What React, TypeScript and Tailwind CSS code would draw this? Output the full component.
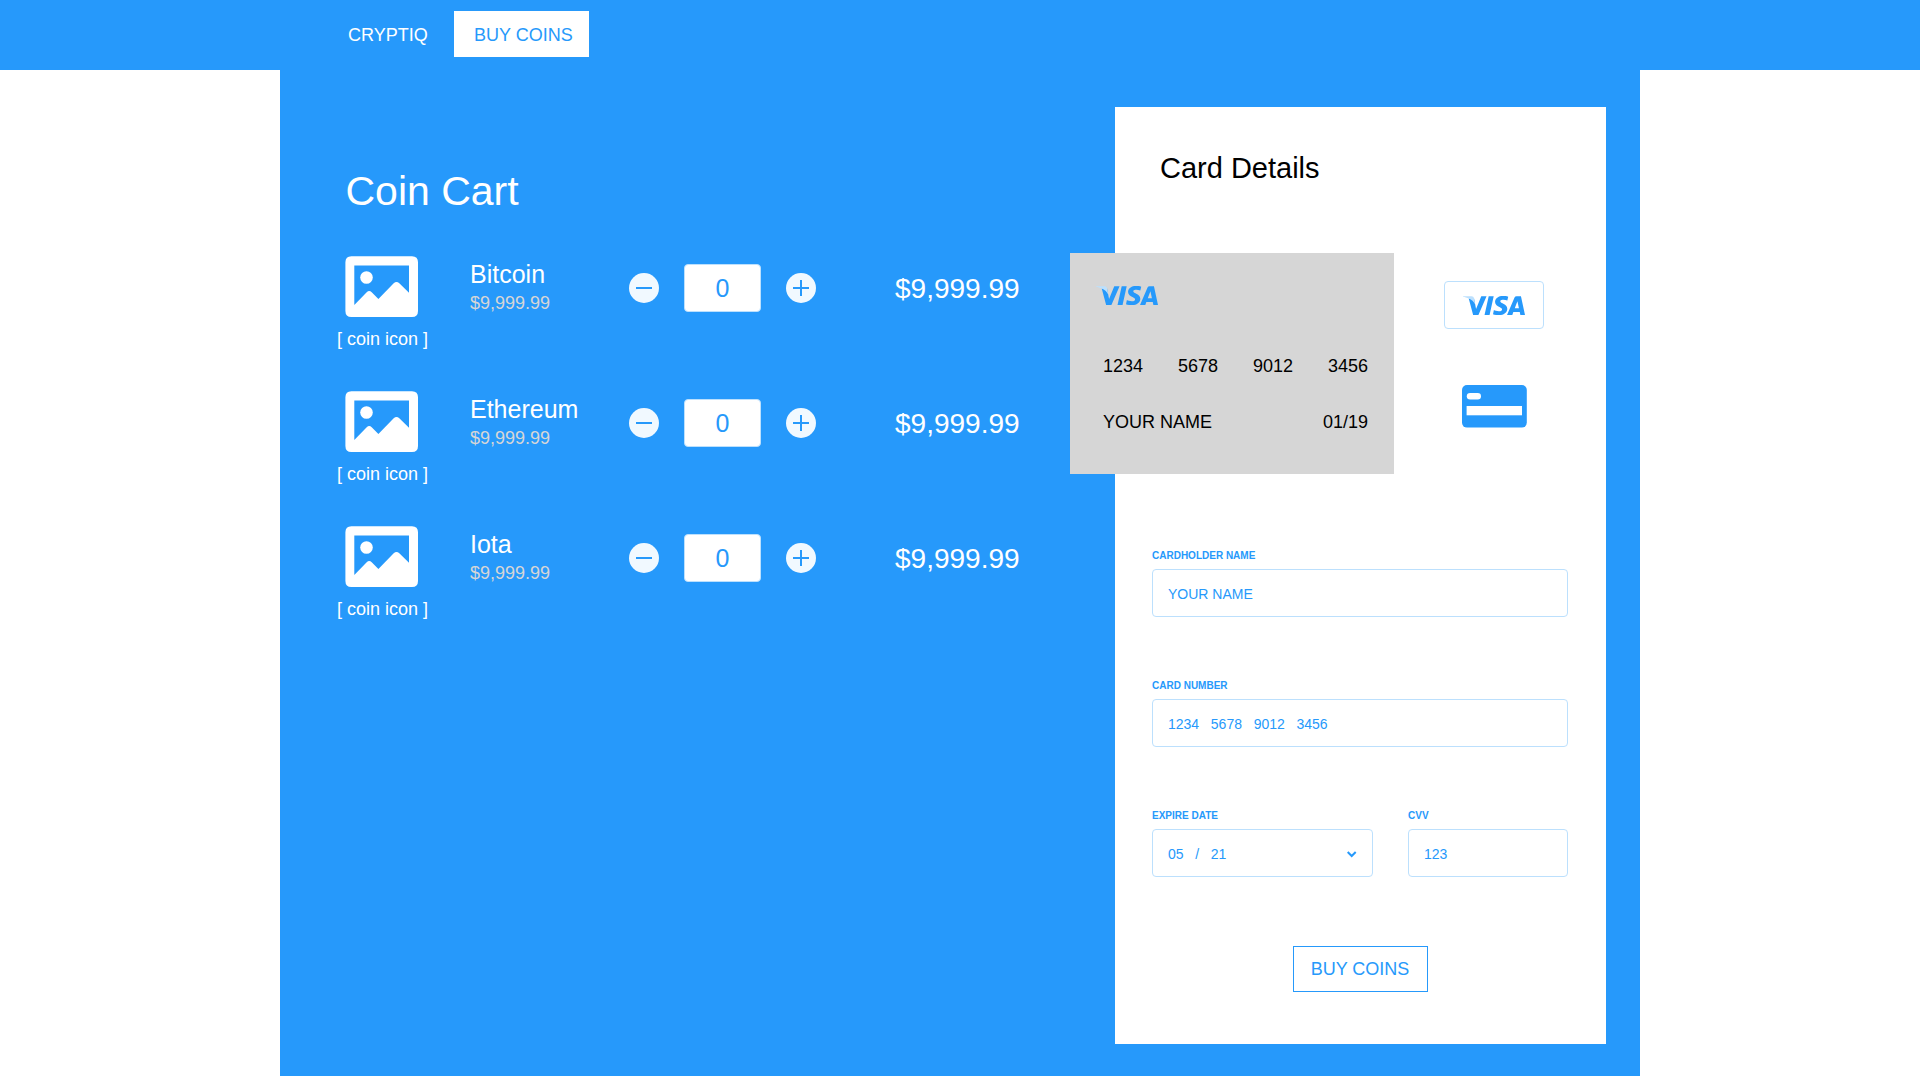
import React from "react";

const coins = [
  { name: "Bitcoin", price: "$9,999.99", quantity: 0, total: "$9,999.99" },
  { name: "Ethereum", price: "$9,999.99", quantity: 0, total: "$9,999.99" },
  { name: "Iota", price: "$9,999.99", quantity: 0, total: "$9,999.99" },
];

function PictureIcon() {
  return (
    <svg width="73" height="61" viewBox="0 0 73 61" className="block" aria-hidden="true">
      <path
        fill="#fff"
        fillRule="evenodd"
        d="M6.4 .2H67Q73 .2 73 6.2V55Q73 61 67 61H6.4Q.4 61 .4 55V6.2Q.4 .2 6.4 .2ZM9.3 9.5V49L21.7 36.2Q24.2 33.8 26.7 36.2L33.4 43L48.7 27.3Q51.5 24.7 54.3 27.3L64 36.7V9.5Z"
      />
      <circle cx="21.5" cy="21.5" r="6.3" fill="#fff" />
    </svg>
  );
}

function VisaLogo() {
  return (
    <svg width="62" height="19" viewBox="0 8.2 24 7.6" preserveAspectRatio="none" className="block" role="img" aria-label="Visa">
      <path
        fill="#2699FB"
        d="M9.112 8.262L5.97 15.758H3.92L2.374 9.775L2.2 9.2L4.24 9.026l.817 4.338 2.018-5.102zm8.033 5.049c.008-1.979-2.736-2.088-2.717-2.972.006-.269.262-.555.822-.628a3.66 3.66 0 011.913.336l.34-1.59a5.207 5.207 0 00-1.814-.333c-1.917 0-3.266 1.02-3.278 2.479-.012 1.079.963 1.68 1.698 2.04.756.367 1.01.603 1.006.931-.005.504-.602.725-1.16.734-.975.015-1.54-.263-1.992-.473l-.351 1.642c.453.208 1.289.39 2.156.398 2.037 0 3.37-1.006 3.377-2.564m5.061 2.447H24l-1.565-7.496h-1.656a.883.883 0 00-.826.55l-2.909 6.946h2.036l.405-1.12h2.488zm-2.163-2.656l1.02-2.815.588 2.815zm-8.16-4.84l-1.603 7.496H8.34l1.605-7.496z"
      />
      <path fill="#BCE0FD" d="M0 8.479L.046 8.262h3.3a.904.904 0 01.894.764l.5 2.6C4.2 10.4 3.3 9.6 2.2 9.15C1.6 8.85.7 8.62 0 8.479Z" />
    </svg>
  );
}

function CreditCardIcon() {
  return (
    <svg width="65" height="43" viewBox="0 0 65 43" className="block" aria-hidden="true">
      <rect width="64.8" height="42.6" rx="5" fill="#2699FB" />
      <rect x="4.8" y="8" width="14.2" height="6.6" rx="3.3" fill="#fff" />
      <rect x="4.6" y="21" width="55.4" height="9.3" fill="#fff" />
    </svg>
  );
}

function RoundButton({ label, plus }: { label: string; plus?: boolean }) {
  return (
    <button aria-label={label} className="mt-[17px] block h-[30px] w-[30px] shrink-0 rounded-full bg-[#F1F9FF]">
      <svg width="30" height="30" viewBox="0 0 30 30" className="block" stroke="#2699FB" strokeWidth="2">
        <path d="M7 15H23" />
        {plus && <path d="M15 7V23" />}
      </svg>
    </button>
  );
}

function CoinRow({ coin }: { coin: (typeof coins)[number] }) {
  return (
    <li className="flex h-[135px] items-start">
      <div className="w-[92px] pl-[9px]">
        <PictureIcon />
        <span className="mt-[12px] -ml-[8px] block text-[18px] leading-[20px] whitespace-nowrap">[ coin icon ]</span>
      </div>
      <div className="mt-[4px] ml-[42px] w-[159px]">
        <h2 className="text-[25px] leading-[28px]">{coin.name}</h2>
        <p className="mt-[5px] text-[18px] leading-[20px] text-[#D6D6D6]">{coin.price}</p>
      </div>
      <RoundButton label="Remove one" />
      <div className="mt-[8px] ml-[25px] flex h-12 w-[77px] items-center justify-center rounded-[4px] border border-[#BCE0FD] bg-white text-[25px] leading-[28px] text-[#2699FB]">
        {coin.quantity}
      </div>
      <div className="ml-[25px]">
        <RoundButton label="Add one" plus />
      </div>
      <p className="mt-[17px] ml-[79px] text-[28px] leading-[32px]">{coin.total}</p>
    </li>
  );
}

function Field({ label, className, children }: { label: string; className: string; children: React.ReactNode }) {
  return (
    <div className={className}>
      <div className="text-[10px] leading-[12px] font-bold">{label}</div>
      <div className="mt-[7px] flex h-12 items-center justify-between rounded-[4px] border border-[#BCE0FD] px-[15px] pt-[2px] text-[14px] leading-[16px] whitespace-pre">
        {children}
      </div>
    </div>
  );
}

function PreviewCard() {
  return (
    <div className="-ml-[45px] h-[221px] w-[324px] bg-[#D6D6D6] pt-[33px] pr-[26px] pl-[26px] text-[18px] leading-[20px]">
      <VisaLogo />
      <div className="mt-[51px] ml-[7px] flex justify-between">
        <span>1234</span>
        <span>5678</span>
        <span>9012</span>
        <span>3456</span>
      </div>
      <div className="mt-[36px] ml-[7px] flex justify-between">
        <span>YOUR NAME</span>
        <span>01/19</span>
      </div>
    </div>
  );
}

export default function App() {
  return (
    <div className="h-[1076px] w-[1920px] overflow-hidden bg-white font-['Liberation_Sans',Arial,sans-serif] text-white">
      <header className="h-[70px] bg-[#2699FB]">
        <nav className="flex items-start pt-[11px] pl-[348px] text-[18px] leading-[20px]">
          <span className="mt-[14px] w-[106px]">CRYPTIQ</span>
          <span className="h-[46px] w-[135px] bg-white pt-[14px] pl-[20px] text-[#2699FB]">BUY COINS</span>
        </nav>
      </header>
      <main className="mx-auto flex h-[1006px] w-[1360px] items-start bg-[#2699FB]">
        <section className="w-[835px] pt-[97px] pl-[56px]">
          <h1 className="ml-[9.5px] text-[41px] leading-[48px]">Coin Cart</h1>
          <ul className="mt-[41px]">
            {coins.map((coin) => (
              <CoinRow key={coin.name} coin={coin} />
            ))}
          </ul>
        </section>
        <section className="mt-[37px] h-[937px] w-[491px] bg-white pt-[45px] text-[#2699FB]">
          <h2 className="ml-[45px] text-[29px] leading-[32px] text-black">Card Details</h2>
          <div className="mt-[69px] flex items-start text-black">
            <PreviewCard />
            <div className="mt-[28px] ml-[50px] flex w-[100px] flex-col items-center">
              <div className="flex h-12 w-[100px] justify-center rounded-[4px] border border-[#BCE0FD] pt-[14px]">
                <VisaLogo />
              </div>
              <div className="mt-[56px]">
                <CreditCardIcon />
              </div>
            </div>
          </div>
          <form className="mt-[76px] ml-[37px] w-[416px]">
            <Field label="CARDHOLDER NAME" className="w-full">
              YOUR NAME
            </Field>
            <Field label="CARD NUMBER" className="mt-[63px] w-full">
              {"1234   5678   9012   3456"}
            </Field>
            <div className="mt-[63px] flex justify-between">
              <Field label="EXPIRE DATE" className="w-[221px]">
                {"05   /   21"}
                <svg width="10" height="7" viewBox="0 0 10 7" fill="none" stroke="#2699FB" strokeWidth="2">
                  <path d="M.7 1L4.7 5L8.7 1" />
                </svg>
              </Field>
              <Field label="CVV" className="w-[160px]">
                123
              </Field>
            </div>
            <button type="button" className="mt-[69px] ml-[141px] block h-[46px] w-[135px] border border-[#2699FB] pr-px text-[18px] leading-[20px]">
              BUY COINS
            </button>
          </form>
        </section>
      </main>
    </div>
  );
}
